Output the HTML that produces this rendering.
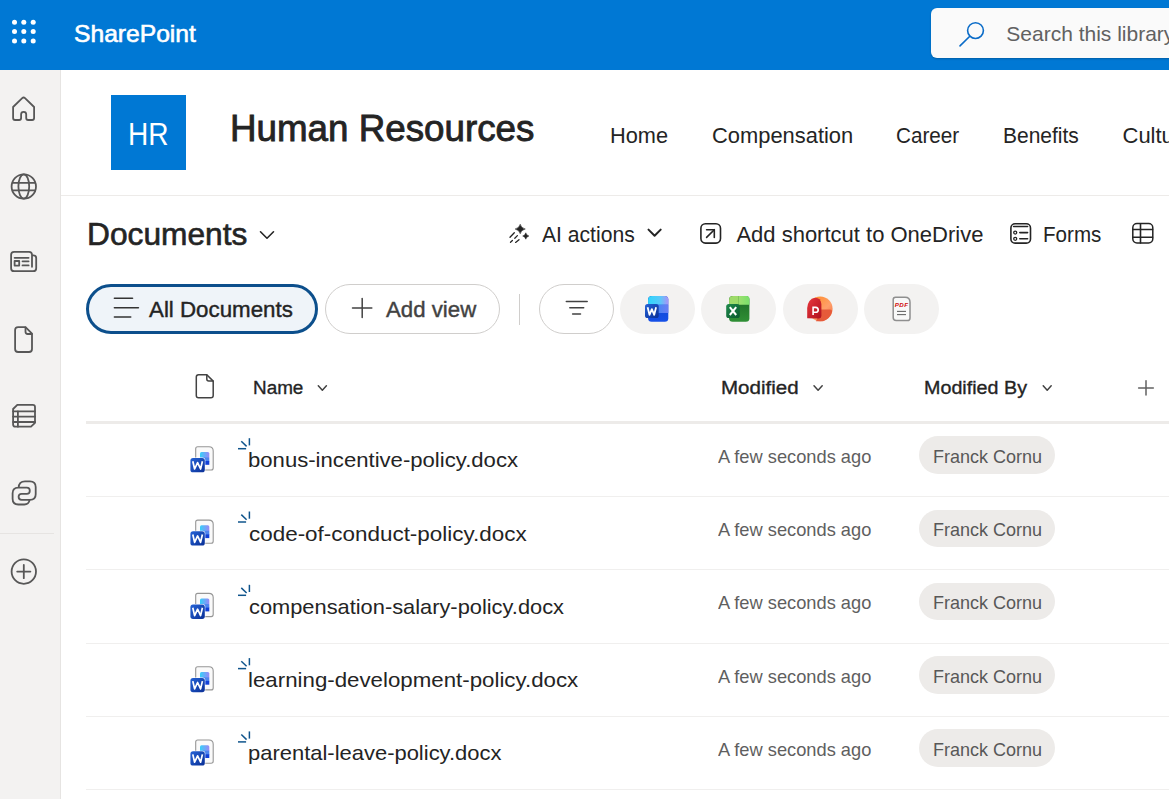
<!DOCTYPE html>
<html><head><meta charset="utf-8">
<title>Documents - Human Resources</title>
<style>
*{margin:0;padding:0;box-sizing:border-box}
html,body{width:1169px;height:799px;overflow:hidden;background:#fff;font-family:"Liberation Sans",sans-serif;color:#242424}
.a{position:absolute;white-space:nowrap;line-height:1;transform-origin:0 0}
#top{position:absolute;left:0;top:0;width:1169px;height:70px;background:#0078d4}
#rail{position:absolute;left:0;top:70px;width:61px;height:729px;background:#f3f2f1;border-right:1px solid #e6e4e2}
.pill{position:absolute;border-radius:25px}
.ofc{position:absolute;top:284px;width:75px;height:50px;border-radius:25px;background:#f3f2f1}
.hline{position:absolute;left:86px;width:1083px;height:1px;background:#f0efee}
.person{position:absolute;left:919.4px;width:135.5px;height:37.5px;border-radius:19px;background:#edebe9}
#ov{position:absolute;left:0;top:0}
</style></head><body>
<div id="top"></div>
<div style="position:absolute;left:931px;top:8px;width:260px;height:49.5px;border-radius:6px;background:#fafafa;box-shadow:0 1px 2px rgba(0,0,0,0.22)"></div>
<div id="rail"></div>
<div style="position:absolute;left:0;top:533px;width:54px;height:1px;background:#e6e4e2"></div>

<div style="position:absolute;left:111px;top:95px;width:75px;height:75px;background:#0078d4"></div>
<div style="position:absolute;left:61px;top:195px;width:1108px;height:1px;background:#edebe9"></div>

<div class="pill" style="left:86px;top:284px;width:232px;height:49.5px;border:3px solid #0c4f8c;background:#eff4f9"></div>
<div class="pill" style="left:325px;top:284px;width:175px;height:50px;border:1px solid #d0cecc;background:#fff"></div>
<div style="position:absolute;left:519px;top:293.5px;width:1px;height:31px;background:#d0cecc"></div>
<div class="pill" style="left:539px;top:284px;width:75px;height:50px;border:1px solid #d0cecc;background:#fff"></div>
<div class="ofc" style="left:620px"></div>
<div class="ofc" style="left:701px"></div>
<div class="ofc" style="left:783px"></div>
<div class="ofc" style="left:864px"></div>

<div style="position:absolute;left:86px;top:421px;width:1083px;height:3px;background:#edebe9"></div>
<div class="hline" style="top:496.0px"></div>
<div class="person" style="top:436.2px"></div>
<div class="hline" style="top:569.3px"></div>
<div class="person" style="top:509.5px"></div>
<div class="hline" style="top:642.6px"></div>
<div class="person" style="top:582.8px"></div>
<div class="hline" style="top:715.9px"></div>
<div class="person" style="top:656.1px"></div>
<div class="hline" style="top:789.2px"></div>
<div class="person" style="top:729.4px"></div>
<div class="a" style="left:74.47px;top:22.48px;font-size:24px;color:#fff;-webkit-text-stroke:0.6px #fff;transform:scaleX(1.0264);">SharePoint</div>
<div class="a" style="left:1006.30px;top:23.22px;font-size:21px;color:#616161;">Search this library</div>
<div class="a" style="left:127.89px;top:118.86px;font-size:31px;color:#fff;transform:scaleX(0.9061);">HR</div>
<div class="a" style="left:230.28px;top:110.80px;font-size:36.5px;color:#242424;-webkit-text-stroke:0.85px #242424;transform:scaleX(1.0070);">Human Resources</div>
<div class="a" style="left:610.01px;top:124.58px;font-size:22px;color:#242424;transform:scaleX(0.9887);">Home</div>
<div class="a" style="left:711.60px;top:124.58px;font-size:22px;color:#242424;transform:scaleX(0.9955);">Compensation</div>
<div class="a" style="left:895.66px;top:124.58px;font-size:22px;color:#242424;transform:scaleX(0.9405);">Career</div>
<div class="a" style="left:1002.65px;top:124.58px;font-size:22px;color:#242424;transform:scaleX(0.9542);">Benefits</div>
<div class="a" style="left:1122.50px;top:124.58px;font-size:22px;color:#242424;">Culture</div>
<div class="a" style="left:86.92px;top:219.08px;font-size:30.5px;color:#242424;-webkit-text-stroke:0.6px #242424;transform:scaleX(1.0394);">Documents</div>
<div class="a" style="left:542.30px;top:224.08px;font-size:22px;color:#242424;transform:scaleX(0.9596);">AI actions</div>
<div class="a" style="left:736.40px;top:224.08px;font-size:22px;color:#242424;">Add shortcut to OneDrive</div>
<div class="a" style="left:1043.06px;top:224.08px;font-size:22px;color:#242424;transform:scaleX(0.9360);">Forms</div>
<div class="a" style="left:149.00px;top:299.28px;font-size:22px;color:#242424;-webkit-text-stroke:0.4px #242424;transform:scaleX(1.0139);">All Documents</div>
<div class="a" style="left:386.20px;top:299.28px;font-size:22px;color:#424242;-webkit-text-stroke:0.4px #424242;transform:scaleX(1.0103);">Add view</div>
<div class="a" style="left:252.85px;top:378.76px;font-size:18px;color:#242424;-webkit-text-stroke:0.32px #242424;transform:scaleX(1.0488);">Name</div>
<div class="a" style="left:721.16px;top:378.76px;font-size:18px;color:#242424;-webkit-text-stroke:0.32px #242424;transform:scaleX(1.1405);">Modified</div>
<div class="a" style="left:924.40px;top:378.76px;font-size:18px;color:#242424;-webkit-text-stroke:0.32px #242424;transform:scaleX(1.0952);">Modified By</div>
<div class="a" style="left:248.25px;top:449.22px;font-size:21px;color:#242424;transform:scaleX(1.0531);">bonus-incentive-policy.docx</div>
<div class="a" style="left:717.70px;top:447.86px;font-size:18.6px;color:#5f5f5f;transform:scaleX(0.9823);">A few seconds ago</div>
<div class="a" style="left:932.93px;top:447.86px;font-size:18.6px;color:#585858;transform:scaleX(0.9686);">Franck Cornu</div>
<div class="a" style="left:249.30px;top:522.52px;font-size:21px;color:#242424;transform:scaleX(1.0683);">code-of-conduct-policy.docx</div>
<div class="a" style="left:717.70px;top:521.16px;font-size:18.6px;color:#5f5f5f;transform:scaleX(0.9823);">A few seconds ago</div>
<div class="a" style="left:932.93px;top:521.16px;font-size:18.6px;color:#585858;transform:scaleX(0.9686);">Franck Cornu</div>
<div class="a" style="left:249.30px;top:595.82px;font-size:21px;color:#242424;transform:scaleX(1.0393);">compensation-salary-policy.docx</div>
<div class="a" style="left:717.70px;top:594.46px;font-size:18.6px;color:#5f5f5f;transform:scaleX(0.9823);">A few seconds ago</div>
<div class="a" style="left:932.93px;top:594.46px;font-size:18.6px;color:#585858;transform:scaleX(0.9686);">Franck Cornu</div>
<div class="a" style="left:248.24px;top:669.12px;font-size:21px;color:#242424;transform:scaleX(1.0609);">learning-development-policy.docx</div>
<div class="a" style="left:717.70px;top:667.76px;font-size:18.6px;color:#5f5f5f;transform:scaleX(0.9823);">A few seconds ago</div>
<div class="a" style="left:932.93px;top:667.76px;font-size:18.6px;color:#585858;transform:scaleX(0.9686);">Franck Cornu</div>
<div class="a" style="left:248.25px;top:742.42px;font-size:21px;color:#242424;transform:scaleX(1.0455);">parental-leave-policy.docx</div>
<div class="a" style="left:717.70px;top:741.06px;font-size:18.6px;color:#5f5f5f;transform:scaleX(0.9823);">A few seconds ago</div>
<div class="a" style="left:932.93px;top:741.06px;font-size:18.6px;color:#585858;transform:scaleX(0.9686);">Franck Cornu</div>
<svg id="ov" width="1169" height="799" viewBox="0 0 1169 799">
<defs>
<linearGradient id="wtop" x1="0" y1="0" x2="1" y2="0"><stop offset="0" stop-color="#2fd6fb"/><stop offset="0.6" stop-color="#5ac8fa"/><stop offset="1" stop-color="#a993f7"/></linearGradient>
<linearGradient id="wmid" x1="0" y1="0" x2="1" y2="0"><stop offset="0" stop-color="#2a8cf2"/><stop offset="1" stop-color="#6a7ef4"/></linearGradient>
<linearGradient id="wbot" x1="0" y1="0" x2="0" y2="1"><stop offset="0" stop-color="#0a45c8"/><stop offset="1" stop-color="#1650e8"/></linearGradient>
<linearGradient id="wsq" x1="0" y1="0" x2="1" y2="1"><stop offset="0" stop-color="#2563d6"/><stop offset="1" stop-color="#0a2f96"/></linearGradient>
<linearGradient id="xtop" x1="0" y1="0" x2="1" y2="0"><stop offset="0" stop-color="#9ee070"/><stop offset="1" stop-color="#78e06a"/></linearGradient>
<linearGradient id="xbot" x1="0" y1="0" x2="0" y2="1"><stop offset="0" stop-color="#1c6a26"/><stop offset="1" stop-color="#2f8f35"/></linearGradient>
<linearGradient id="xsq" x1="0" y1="0" x2="1" y2="1"><stop offset="0" stop-color="#1f8a4c"/><stop offset="1" stop-color="#0a5a2e"/></linearGradient>
<linearGradient id="pcirc" x1="0" y1="0" x2="1" y2="1"><stop offset="0" stop-color="#ff8a1a"/><stop offset="0.6" stop-color="#ff9f6a"/><stop offset="1" stop-color="#f06a3a"/></linearGradient>
<linearGradient id="psq" x1="0" y1="0" x2="1" y2="1"><stop offset="0" stop-color="#e8383d"/><stop offset="1" stop-color="#b0101e"/></linearGradient>
<linearGradient id="bars" x1="0" y1="0" x2="1" y2="0"><stop offset="0" stop-color="#36d0fa"/><stop offset="1" stop-color="#9a88f5"/></linearGradient>
<g id="docx">
  <path d="M195.7,448.8 Q195.7,446.8 197.7,446.8 L209,446.8 Q213.2,446.8 213.2,451 L213.2,468 Q213.2,470 211.2,470 L197.7,470 Q195.7,470 195.7,468 Z" fill="#fafafa" stroke="#969696" stroke-width="1.1"/>
  <rect x="200" y="452" width="9.3" height="6.5" rx="1.5" fill="url(#bars)"/>
  <rect x="200" y="457.5" width="9.3" height="4" fill="#4f86ee"/>
  <rect x="200" y="461" width="9.3" height="3.8" fill="#1140d8"/>
  <rect x="189.9" y="457.5" width="15.4" height="15.3" rx="3" fill="#fff"/>
  <rect x="190.4" y="458" width="14.4" height="14.3" rx="2.6" fill="url(#wsq)"/>
  <path d="M192.8,461.2 L194.6,469 L197.6,462.6 L200.6,469 L202.4,461.2" fill="none" stroke="#fff" stroke-width="1.7" stroke-linejoin="round"/>
</g>
<g id="spark" fill="none" stroke="#0f548c" stroke-width="1.5" stroke-linecap="butt">
  <line x1="238" y1="448.7" x2="246.1" y2="448.7"/>
  <line x1="241.3" y1="441.3" x2="246.6" y2="446.4"/>
  <line x1="249.4" y1="438.2" x2="249.4" y2="445.4"/>
</g>
</defs>

<!-- waffle -->
<g fill="#fff">
<circle cx="14.5" cy="22.2" r="2.5"/><circle cx="23.8" cy="22.2" r="2.5"/><circle cx="33.2" cy="22.2" r="2.5"/>
<circle cx="14.5" cy="31.6" r="2.5"/><circle cx="23.8" cy="31.6" r="2.5"/><circle cx="33.2" cy="31.6" r="2.5"/>
<circle cx="14.5" cy="41" r="2.5"/><circle cx="23.8" cy="41" r="2.5"/><circle cx="33.2" cy="41" r="2.5"/>
</g>
<!-- search icon -->
<g fill="none" stroke="#0b6cc8" stroke-width="1.6" stroke-linecap="round">
<circle cx="975.5" cy="30.6" r="7.9"/>
<line x1="969.8" y1="36.3" x2="960" y2="45.9"/>
</g>

<!-- rail icons -->
<g fill="none" stroke="#575757" stroke-width="1.8" stroke-linejoin="round" stroke-linecap="round">
<path d="M13.1,107 L22.2,98.2 Q23.6,96.9 25,98.2 L34.1,107 L34.1,118 Q34.1,120 32.1,120 L28.2,120 Q26.2,120 26.2,118 L26.2,114.3 Q26.2,111.8 23.65,111.8 Q21.1,111.8 21.1,114.3 L21.1,118 Q21.1,120 19.1,120 L15.1,120 Q13.1,120 13.1,118 Z"/>
<circle cx="23.8" cy="186.5" r="12.2"/>
<ellipse cx="23.8" cy="186.5" rx="5.4" ry="12.2"/>
<line x1="12.6" y1="182.8" x2="35" y2="182.8"/>
<line x1="12.6" y1="190.4" x2="35" y2="190.4"/>
<path d="M32,266.8 L32,254.8 Q32,251.8 29,251.8 L14.1,251.8 Q11.1,251.8 11.1,254.8 L11.1,268.2 Q11.1,271.2 14.1,271.2 L33.2,271.2 Q36.2,271.2 36.2,268.2 L36.2,258 Q36.2,255.3 33.6,255.3 L32,255.3"/>
<line x1="14.6" y1="257.8" x2="28.6" y2="257.8"/>
<rect x="14.6" y="261" width="4.6" height="4.6"/>
<line x1="22.5" y1="261.3" x2="28.6" y2="261.3"/>
<line x1="22.5" y1="265.4" x2="28.6" y2="265.4"/>
<path d="M25.5,327.1 L18.1,327.1 Q15.1,327.1 15.1,330.1 L15.1,349 Q15.1,352 18.1,352 L29,352 Q32,352 32,349 L32,333.6 Z"/>
<path d="M25.5,327.3 L25.5,331.8 Q25.5,334 27.7,334 L31.8,334"/>
<path d="M17.3,404.8 L32.8,404.8 Q35,404.8 35,407 L35,422.8 L31,426.7 L15.3,426.7 Q13.1,426.7 13.1,424.5 L13.1,409 Z"/>
<line x1="13.1" y1="411.3" x2="35" y2="411.3"/>
<line x1="13.1" y1="416.6" x2="35" y2="416.6"/>
<line x1="13.1" y1="422" x2="35" y2="422"/>
<line x1="17.9" y1="411.3" x2="17.9" y2="426.7"/>
<path d="M18.6,487.6 Q19,481.3 25,481.3 L30,481.3 Q35.7,481.3 35.7,487 L35.7,494.2 Q35.7,499.8 30,499.8 L21.6,499.8 Q18.6,499.8 18.6,496.8 Q18.6,493.9 21.6,493.9 L26.8,493.9 Q29.8,493.9 29.8,490.8 Q29.8,487.7 26.8,487.7 L18.2,487.7 Q12.6,487.7 12.6,493.3 L12.6,498.8 Q12.6,504.5 18.3,504.5 L24.3,504.5 Q28.8,504.5 29.6,500.2"/>
<circle cx="23.8" cy="571.6" r="12.2"/>
<line x1="17.2" y1="571.6" x2="30.4" y2="571.6"/>
<line x1="23.8" y1="565" x2="23.8" y2="578.2"/>
</g>

<!-- command bar icons -->
<g fill="none" stroke="#242424" stroke-width="1.6" stroke-linecap="round" stroke-linejoin="round">
<polyline points="260.5,231.8 267,238.2 273.5,231.8"/>
<polyline points="648.5,229.6 654.6,235.8 660.7,229.6" stroke-width="2"/>
<rect x="700.9" y="223.8" width="19.6" height="19.3" rx="4.5"/>
<line x1="706.6" y1="237.4" x2="714.3" y2="229.7"/>
<polyline points="706.6,229.7 714.3,229.7 714.3,237.4"/>
<rect x="1010.9" y="223.8" width="19.6" height="19.3" rx="4.2"/>
<line x1="1013.6" y1="226.5" x2="1027.6" y2="226.5"/>
<line x1="1019.8" y1="232.6" x2="1027.6" y2="232.6"/>
<line x1="1019.8" y1="238.8" x2="1027.6" y2="238.8"/>
<circle cx="1015.2" cy="232.6" r="1.5" stroke-width="1.3"/>
<circle cx="1015.2" cy="238.8" r="1.5" stroke-width="1.3"/>
<rect x="1132.8" y="223.6" width="20" height="19.4" rx="4.2" stroke-width="1.5"/>
<line x1="1140.5" y1="224" x2="1140.5" y2="243"/>
<line x1="1133" y1="229.5" x2="1152.5" y2="229.5"/>
<line x1="1133" y1="237.2" x2="1152.5" y2="237.2"/>
</g>
<!-- AI sparkle -->
<g fill="#242424" stroke="#242424" stroke-width="0.5" stroke-linejoin="round">
<path d="M520.2,224.2 Q521.1,228 525.3,229 Q521.1,230 520.2,233.8 Q519.3,230 515.1,229 Q519.3,228 520.2,224.2 Z"/>
<path d="M525.8,232.8 Q526.3,235.2 528.9,236 Q526.3,236.8 525.8,239.2 Q525.3,236.8 522.7,236 Q525.3,235.2 525.8,232.8 Z"/>
</g>
<g stroke="#242424" stroke-width="1.3" stroke-linecap="round">
<line x1="510" y1="237.2" x2="514.3" y2="232.8"/>
<line x1="514.8" y1="238.2" x2="517.4" y2="235.6"/>
<line x1="510.5" y1="242.3" x2="512.4" y2="240.5"/>
<line x1="515.6" y1="242.4" x2="519" y2="239.7"/>
</g>

<!-- pivot icons -->
<g fill="none" stroke="#333" stroke-width="1.6" stroke-linecap="round">
<line x1="114.4" y1="298.3" x2="132.5" y2="298.3"/>
<line x1="114.4" y1="307.8" x2="138.4" y2="307.8"/>
<line x1="114.4" y1="317" x2="130.7" y2="317"/>
</g>
<g fill="none" stroke="#424242" stroke-width="1.5" stroke-linecap="round">
<line x1="352.5" y1="308" x2="371.8" y2="308"/>
<line x1="362.2" y1="298.4" x2="362.2" y2="317.6"/>
<line x1="566.3" y1="301.4" x2="587.2" y2="301.4"/>
<line x1="569.8" y1="307.8" x2="583.7" y2="307.8"/>
<line x1="572.6" y1="313.9" x2="580.5" y2="313.9"/>
</g>

<!-- Word -->
<rect x="648.1" y="296" width="20.2" height="25.8" rx="3.5" fill="url(#wbot)"/>
<path d="M648.1,304.8 L648.1,300 Q648.1,296 652.1,296 L664.8,296 Q668.3,296 668.3,299.5 L668.3,304.8 Z" fill="url(#wtop)"/>
<rect x="648.1" y="304.8" width="20.2" height="8.2" fill="url(#wmid)"/>
<rect x="645" y="303.9" width="13.7" height="14.1" rx="2.6" fill="url(#wsq)"/>
<path d="M647.6,307.3 L649.5,314.8 L651.85,309.2 L654.2,314.8 L656.1,307.3" fill="none" stroke="#fff" stroke-width="1.8" stroke-linejoin="round"/>
<!-- Excel -->
<rect x="729.1" y="296" width="20.3" height="25.8" rx="3.5" fill="url(#xbot)"/>
<path d="M729.1,304.8 L729.1,300 Q729.1,296 733.1,296 L738.7,296 L738.7,304.8 Z" fill="#9edb6a"/>
<path d="M738.7,296 L746.6,296 Q749.4,296 749.4,298.8 L749.4,304.8 L738.7,304.8 Z" fill="url(#xtop)"/>
<rect x="726.2" y="303.9" width="13.6" height="14.1" rx="2.6" fill="url(#xsq)"/>
<path d="M729.8,307.2 L736.2,315 M736.2,307.2 L729.8,315" fill="none" stroke="#fff" stroke-width="2"/>
<!-- PowerPoint -->
<circle cx="820.2" cy="308.8" r="12.4" fill="url(#pcirc)"/>
<path d="M820.8,309.5 L830,309.5 Q832.4,309.5 832,312 Q830,319 823,321.2 L816,321.2 Z" fill="#e65a3a"/>
<path d="M807.2,318.2 L807.2,308 Q808,299 815,297.8 Q820.6,297.6 821.4,304 L821.4,316 Q821.4,318.4 819,318.4 Z" fill="url(#psq)"/>
<path d="M813.1,315 L813.1,307.4 L815.6,307.4 Q818.2,307.6 818.2,310 Q818.2,312.3 815.6,312.3 L813.1,312.3" fill="none" stroke="#fff" stroke-width="1.6"/>
<!-- PDF -->
<path d="M893.2,299.6 Q893.2,297.2 895.6,297.2 L905,297.2 Q910,297.2 910,302.2 L910,318 Q910,320.6 907.4,320.6 L896.2,320.6 Q893.2,320.6 893.2,317.6 Z" fill="#f8f8f8" stroke="#8f8f8f" stroke-width="1.5"/>
<text x="901.6" y="307.4" text-anchor="middle" font-family="Liberation Sans" font-weight="bold" font-style="italic" font-size="6.2" letter-spacing="0.4" fill="#d00808">PDF</text>
<g stroke="#666" stroke-width="1.1">
<line x1="897" y1="311.4" x2="906" y2="311.4"/>
<line x1="897" y1="314.6" x2="906" y2="314.6"/>
</g>

<!-- table header icons -->
<g fill="none" stroke="#424242" stroke-width="1.5" stroke-linecap="round" stroke-linejoin="round">
<path d="M206.8,374.7 L198.6,374.7 Q196.3,374.7 196.3,377 L196.3,395.5 Q196.3,397.8 198.6,397.8 L210.9,397.8 Q213.2,397.8 213.2,395.5 L213.2,381.1 Z"/>
<path d="M206.8,374.9 L206.8,379 Q206.8,381 208.8,381 L213,381"/>
<polyline points="318.3,385.8 322.35,390.2 326.4,385.8"/>
<polyline points="814,385.8 818.1,390.2 822.2,385.8"/>
<polyline points="1043.2,385.8 1047.2,390.2 1051.2,385.8"/>
<line x1="1138.6" y1="388" x2="1153.3" y2="388" stroke="#616161"/>
<line x1="1146" y1="380.8" x2="1146" y2="395.1" stroke="#616161"/>
</g>
<use href="#docx" transform="translate(0 0.00)"/><use href="#spark" transform="translate(0 0.00)"/>
<use href="#docx" transform="translate(0 73.30)"/><use href="#spark" transform="translate(0 73.30)"/>
<use href="#docx" transform="translate(0 146.60)"/><use href="#spark" transform="translate(0 146.60)"/>
<use href="#docx" transform="translate(0 219.90)"/><use href="#spark" transform="translate(0 219.90)"/>
<use href="#docx" transform="translate(0 293.20)"/><use href="#spark" transform="translate(0 293.20)"/>
</svg>

</body></html>
